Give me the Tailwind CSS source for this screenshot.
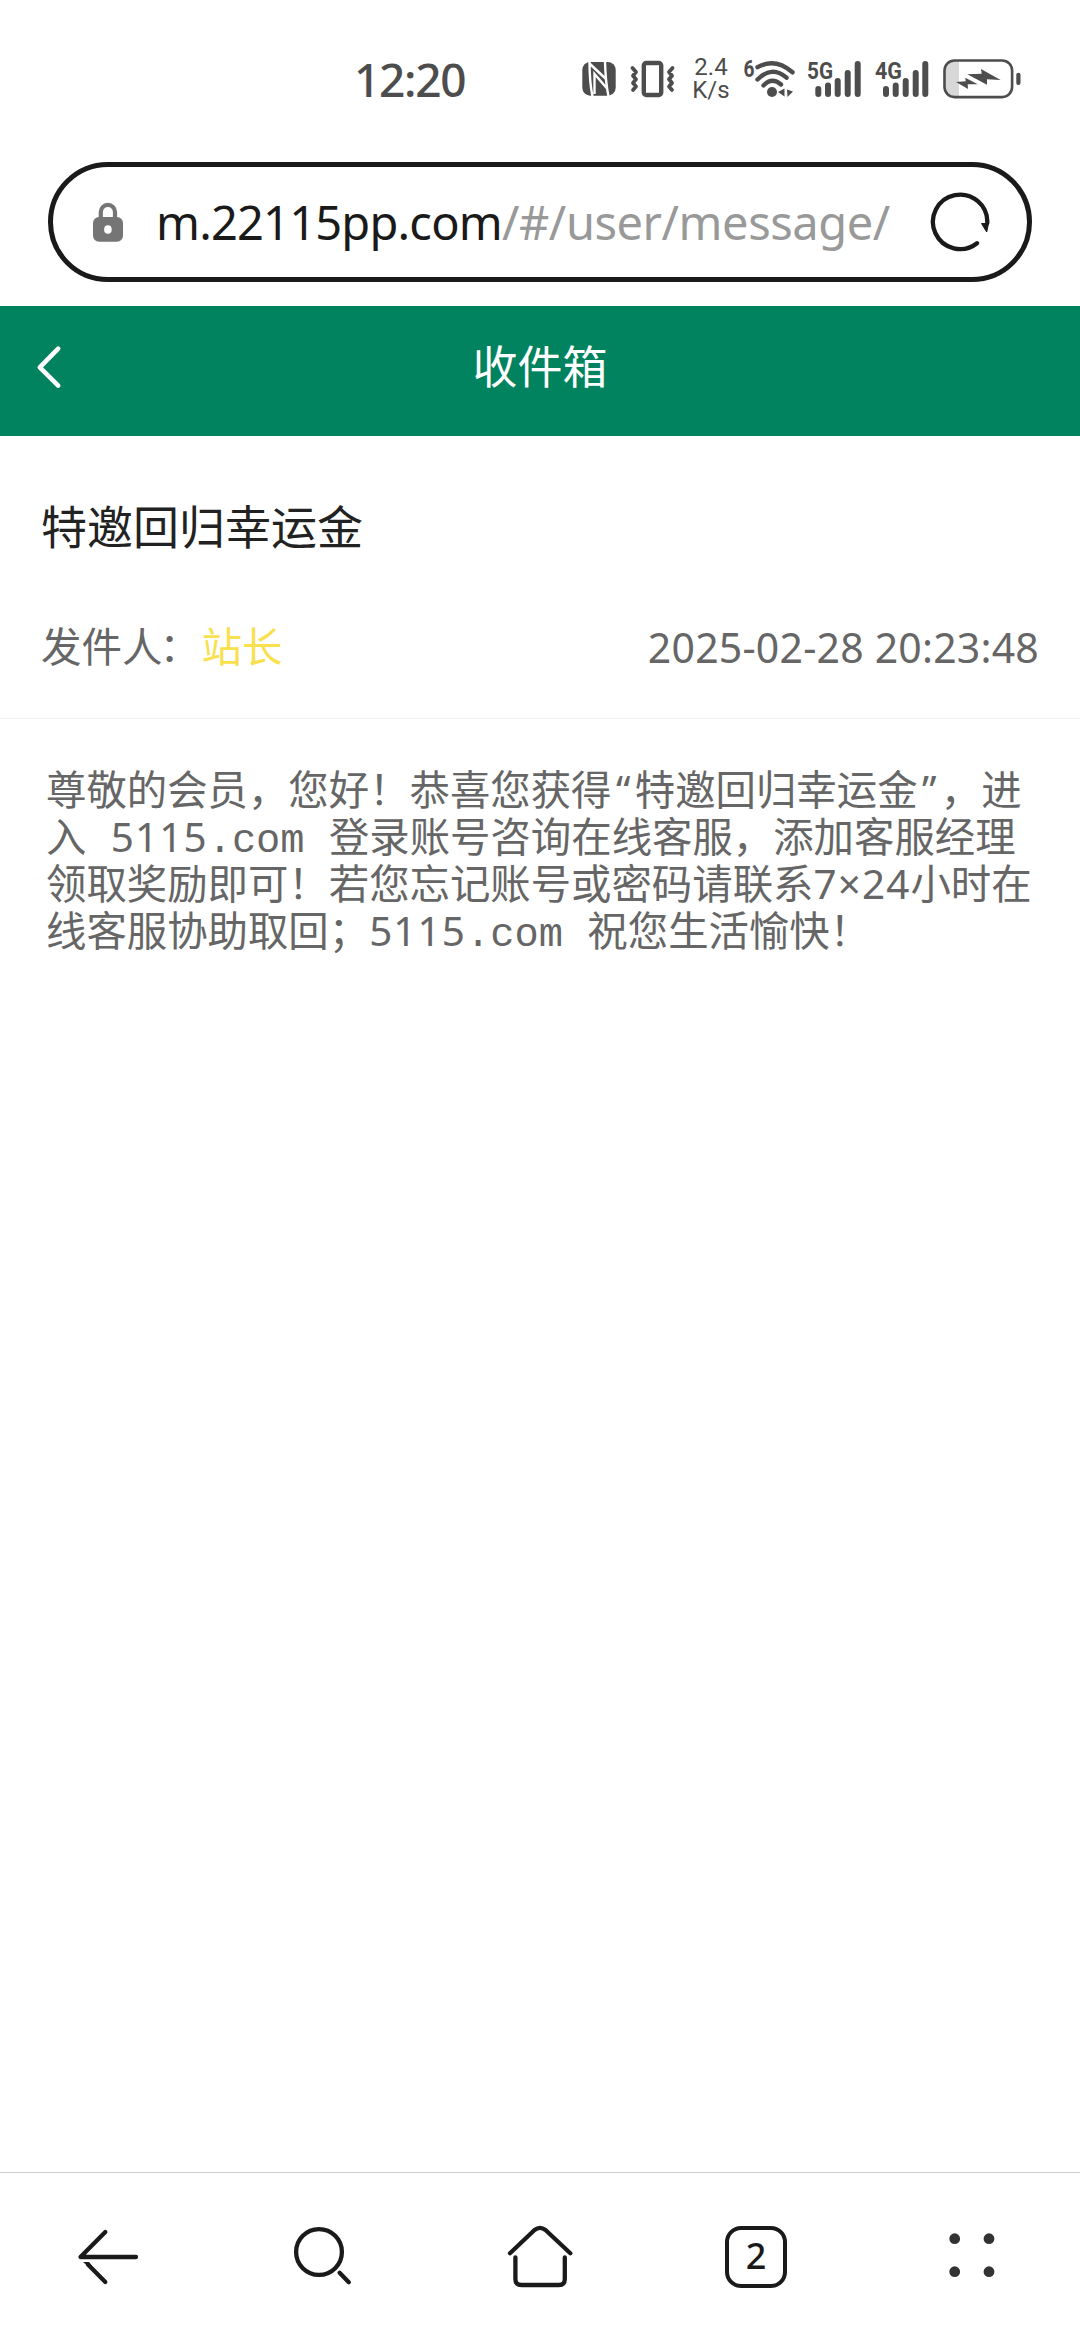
<!DOCTYPE html>
<html lang="zh-CN">
<head>
<meta charset="utf-8">
<title>收件箱</title>
<script src="https://cdn.jsdelivr.net/npm/@tailwindcss/browser@4"></script>
</head>
<body class="bg-white">
<div class="flex h-[2340px] w-[1080px] flex-col overflow-hidden bg-white font-['Noto_Sans','Noto_Sans_CJK_SC',sans-serif]">
  <!-- Status bar -->
  <div class="flex h-[162px] shrink-0 items-start pt-[54px] text-[#4d4d4d]">
    <div class="ml-[354px] w-[212px] text-[46px] leading-[50px] font-medium whitespace-nowrap tracking-[-1.3px]">12:20</div>
    <svg class="h-[50px] w-[120px] shrink-0" viewBox="566 54 120 50">
      <rect x="582.3" y="62" width="33.4" height="33.7" rx="8" fill="#4d4d4d"/>
      <path d="M589.5 61.5Q589.5 82 592.5 96.5M590 64L606 79M594.5 94V74L607.5 89M605 61.5Q605.5 82 608.5 96.5" fill="none" stroke="#fff" stroke-width="2.4"/>
      <g fill="none" stroke="#4d4d4d" stroke-linecap="round" stroke-linejoin="round">
        <rect x="643.8" y="63" width="17.4" height="32" rx="2.5" stroke-width="4.4"/>
        <path d="M632.5 68l3.5 4-3 3.7 3 3.5-3 3.7 3 3.5-3 3.5M672.5 68l-3.5 4 3 3.7-3 3.5 3 3.7-3 3.5 3 3.5" stroke-width="3.8"/>
      </g>
    </svg>
    <div class="w-[50px] pt-[2px] text-center text-[24px] leading-[23px] font-['Roboto',sans-serif]"><div>2.4</div><div>K/s</div></div>
    <svg class="h-[50px] w-[290px] shrink-0" viewBox="736 54 290 50" fill="#4d4d4d">
      <g font-family="Roboto, sans-serif" font-weight="700" font-size="24">
        <text x="743.5" y="77" textLength="11" lengthAdjust="spacingAndGlyphs">6</text>
        <text x="807" y="79" textLength="26" lengthAdjust="spacingAndGlyphs">5G</text>
        <text x="875" y="79" textLength="27" lengthAdjust="spacingAndGlyphs">4G</text>
      </g>
      <path d="M757.500 67.200Q775 57.500 792.500 72.300M757.500 79.500Q772 65 786.500 77.700M763.500 85.500Q772 76.500 781 84.500" fill="none" stroke="#4d4d4d" stroke-width="4.400" stroke-linecap="round"/>
      <circle cx="772" cy="92" r="5"/>
      <path d="M778 92l6.5-3.5v8zM787 89.500l6 2-5.500 5.500z"/>
      <g stroke="#4d4d4d" stroke-width="6" stroke-linecap="round">
        <path d="M818.3 89v5M828 85.5v8.5M837.7 81v13M847.7 73v21M857.7 64v30"/>
        <path d="M886 89v5M895.7 85.5v8.5M905.7 81v13M915.7 73v21M925.3 64v30"/>
      </g>
      <path d="M959 61h-6q-8 0-8 9v18q0 9 8 9h6z" fill="#d8d8d8"/>
      <rect x="944.5" y="60.5" width="67.6" height="36.6" rx="10" fill="none" stroke="#4d4d4d" stroke-width="2.6"/>
      <rect x="1016.3" y="72.7" width="4.2" height="12.3" rx="2"/>
      <path d="M967.3 74.3L981.7 73.7 981 69 1000.7 80 987 79.3 987 84.7zM956 82L965.7 81.3 965.3 77.7 977.7 84.3 967.7 84.3 968 89z"/>
    </svg>
  </div>
  <!-- Address bar -->
  <div class="mx-[48px] flex h-[120px] shrink-0 items-center rounded-full border-[5px] border-[#1a1a1a]">
    <svg class="ml-[37px] h-[44px] w-[36px] shrink-0" viewBox="90 200 36 44">
      <path d="M100.8 218v-6a7.1 7.1 0 0 1 14.2 0v6" fill="none" stroke="#757575" stroke-width="4.2"/>
      <rect x="93" y="217" width="30" height="24.7" rx="6" fill="#757575"/>
      <ellipse cx="107.9" cy="229.5" rx="3.8" ry="4.3" fill="#fff"/>
    </svg>
    <div class="ml-[30px] w-[772px] text-[47px] leading-[60px] whitespace-nowrap"><span class="tracking-[-0.8px] text-[#1a1a1a]">m.22115pp.com</span><span class="tracking-[-0.45px] text-[#999]">/#/user/message/</span></div>
    <svg class="h-[64px] w-[64px] shrink-0" viewBox="928 190 64 64">
      <path d="M987.3 223A27.2 27.2 0 1 0 977 243.2" fill="none" stroke="#1a1a1a" stroke-width="4.3" stroke-linecap="round"/>
      <path d="M981.5 223.5h7l-1.800 8.5z" fill="#1a1a1a" stroke="#1a1a1a" stroke-linejoin="round"/>
    </svg>
  </div>
  <!-- Page header -->
  <header class="mt-[24px] grid h-[130px] shrink-0 grid-cols-3 items-center bg-[#02835f] text-white">
    <svg class="mb-[9px] ml-[30px] h-[46px] w-[40px]" viewBox="30 348 40 46"><path d="M58.2 352.7L39.8 371.3 58.2 389.6" fill="none" stroke="#fff" stroke-width="4.6" stroke-linecap="round" stroke-linejoin="round"/></svg>
    <h1 class="pb-[9px] text-center text-[45px] leading-[60px]">收件箱</h1>
  </header>
  <!-- Message heading -->
  <section class="h-[283px] shrink-0 border-b border-[#f2f2f2] px-[41px] pt-[60px]">
    <h2 class="text-[46px] leading-[60px] text-[#222]">特邀回归幸运金</h2>
    <div class="mt-[61px] flex items-center justify-between text-[40.5px] leading-[60px] text-[#666]">
      <div class="flex"><span>发件人</span><span class="-ml-[3px]">：</span><span class="ml-[1.5px] text-[#f9e04e]">站长</span></div>
      <div class="text-[41px] tracking-[0.2px]">2025-02-28 20:23:48</div>
    </div>
  </section>
  <!-- Message body -->
  <div class="flex-1 pt-[47px] pl-[46px] text-[40.4px] leading-[47px] whitespace-nowrap text-[#666]">
    <div class="h-[47px]">尊敬的会员，您好！恭喜您获得<span class="mx-[4.4px]">“</span>特邀回归幸运金<span class="mx-[4.4px]">”</span>，进</div>
    <div class="h-[47px]">入<span class="ml-[24.3px] tracking-[1.13px]">5115</span><span class="mr-[24.3px] font-['Liberation_Mono',monospace]">.com</span>登录账号咨询在线客服，添加客服经理</div>
    <div class="h-[47px]">领取奖励即可！若您忘记账号或密码请联系<span class="tracking-[1.13px]">7×24</span>小时在</div>
    <div class="h-[47px]">线客服协助取回；<span class="tracking-[1.13px]">5115</span><span class="mr-[24.3px] font-['Liberation_Mono',monospace]">.com</span>祝您生活愉快！</div>
  </div>
  <!-- Browser toolbar -->
  <nav class="grid h-[168px] shrink-0 grid-cols-5 place-items-center border-t border-[#ccc]">
    <svg class="h-[72px] w-[72px]" viewBox="72 2221 72 72" fill="none" stroke="#1a1a1a" stroke-width="4.3" stroke-linecap="round" stroke-linejoin="round"><path d="M136 2257H80.5L105.3 2232"/><path d="M88 2264.5L105.3 2282"/><path d="M83 2262h6l3 4-3 1z" fill="#1a1a1a" stroke="none"/></svg>
    <svg class="h-[72px] w-[72px]" viewBox="288 2221 72 72" fill="none" stroke="#1a1a1a" stroke-width="4.3" stroke-linecap="round"><circle cx="319" cy="2252" r="22.9"/><path d="M339.6 2272.8L348.8 2282.3"/></svg>
    <svg class="h-[72px] w-[72px]" viewBox="504 2221 72 72" fill="none" stroke="#1a1a1a" stroke-width="4.3" stroke-linecap="round" stroke-linejoin="round"><path d="M510 2253.3L534.5 2230Q540 2225.8 545.5 2230L570.3 2253.3"/><path d="M515.4 2257.500V2279Q515.4 2285 521.4 2285H559Q564.8 2285 564.8 2279V2257.500"/></svg>
    <div class="flex h-[62px] w-[62px] items-center justify-center rounded-[16px] border-[4px] border-[#1a1a1a] text-[36px] leading-[40px] font-medium text-[#1a1a1a]"><span class="-mt-[2px]">2</span></div>
    <svg class="h-[72px] w-[72px]" viewBox="936 2221 72 72" fill="#333"><circle cx="954.7" cy="2238.7" r="5.4"/><circle cx="989" cy="2238.7" r="5.4"/><circle cx="954.7" cy="2271.7" r="5.4"/><circle cx="989" cy="2271.7" r="5.4"/></svg>
  </nav>
</div>
</body>
</html>
